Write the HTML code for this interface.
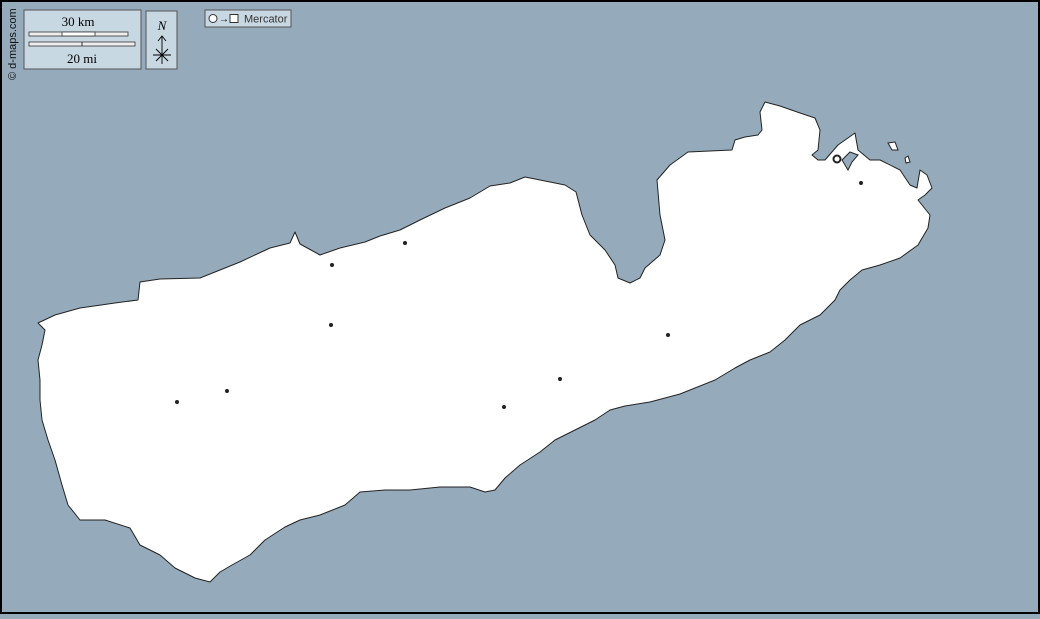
<!DOCTYPE html>
<html><head><style>
body{margin:0;width:1040px;height:614px;overflow:hidden;background:#95abbb;font-family:"Liberation Serif",serif}
</style></head><body>
<svg width="1040" height="614" viewBox="0 0 1040 614" xmlns="http://www.w3.org/2000/svg">
<rect x="1" y="1" width="1038" height="612" fill="#95abbb" stroke="#000" stroke-width="2"/>
<path fill="#fff" stroke="#222" stroke-width="1" stroke-linejoin="round" d="M38,323 L55,315 80,308 115,303 138,300 140,282 160,279 200,278 240,262 270,248 290,243 295,232 300,244 320,255 340,248 365,242 380,236 400,230 420,220 445,208 470,198 490,186 510,183 525,177 545,181 565,185 576,192 582,215 590,235 605,250 615,265 618,278 630,283 640,278 645,268 660,255 665,240 660,215 657,180 670,165 688,152 710,151 732,150 735,140 745,137 758,135 762,130 760,112 765,102 780,106 800,113 815,118 820,130 818,150 812,155 818,160 825,160 838,145 855,133 858,150 870,160 880,160 900,170 910,185 917,188 920,170 927,175 932,188 925,195 918,200 930,215 928,228 918,245 900,258 880,265 862,270 850,280 840,290 835,300 820,315 800,325 785,340 770,352 750,360 735,368 715,380 695,388 680,394 650,402 625,406 610,410 595,420 575,430 555,440 540,452 520,465 505,478 495,490 485,492 470,487 440,487 410,490 385,490 360,492 345,505 320,515 300,520 285,527 265,540 250,555 232,565 220,572 210,582 195,578 175,568 160,555 140,545 130,528 105,520 80,520 68,505 62,485 55,460 48,440 42,420 40,400 40,380 38,360 42,345 45,330 Z"/>
<path fill="#95abbb" stroke="#222" stroke-width="1" d="M842,160 L850,152 858,155 852,162 848,170 Z"/>
<path fill="#fff" stroke="#222" stroke-width="1" d="M888,143 L895,142 898,150 892,150 Z M905,158 L908,156 910,162 906,163 Z"/>
<g fill="#222">
<circle cx="332" cy="265" r="2"/><circle cx="405" cy="243" r="2"/><circle cx="331" cy="325" r="2"/><circle cx="177" cy="402" r="2"/><circle cx="227" cy="391" r="2"/><circle cx="504" cy="407" r="2"/><circle cx="560" cy="379" r="2"/><circle cx="668" cy="335" r="2"/><circle cx="861" cy="183" r="2"/>
</g>
<circle cx="837" cy="159" r="3.5" fill="none" stroke="#222" stroke-width="2"/>
<rect x="24" y="10" width="117" height="59" fill="#c8d8e2" stroke="#555"/>
<text x="78" y="26" font-size="13" text-anchor="middle">30 km</text>
<rect x="29" y="32" width="99" height="4" fill="#eee" stroke="#333" stroke-width="0.8"/>
<rect x="62" y="32" width="33" height="4" fill="#fff" stroke="#333" stroke-width="0.8"/>
<rect x="29" y="42" width="106" height="4" fill="#eee" stroke="#333" stroke-width="0.8"/>
<line x1="82" y1="42" x2="82" y2="46" stroke="#333"/>
<text x="82" y="63" font-size="13" text-anchor="middle">20 mi</text>
<rect x="146" y="11" width="31" height="58" fill="#c8d8e2" stroke="#555"/>
<text x="162" y="30" font-size="13" font-style="italic" text-anchor="middle">N</text>
<path d="M162,36 V64 M158,41 L162,36 166,41 M153,55 H171 M156,49 L168,61 M156,61 L168,49" stroke="#000" stroke-width="0.9" fill="none"/>
<rect x="205" y="10" width="86" height="17" fill="#c8d8e2" stroke="#555"/>
<circle cx="213" cy="18.5" r="4" fill="#fff" stroke="#333"/>
<text x="219" y="22" font-size="10" font-family="Liberation Sans,sans-serif">→</text>
<rect x="230" y="14.5" width="8" height="8" fill="#fff" stroke="#333"/>
<text x="244" y="22.5" font-size="11" font-family="Liberation Sans,sans-serif" fill="#333">Mercator</text>
<text transform="translate(16,80) rotate(-90)" font-size="11" font-family="Liberation Sans,sans-serif" fill="#111">© d-maps.com</text>
</svg>
</body></html>
